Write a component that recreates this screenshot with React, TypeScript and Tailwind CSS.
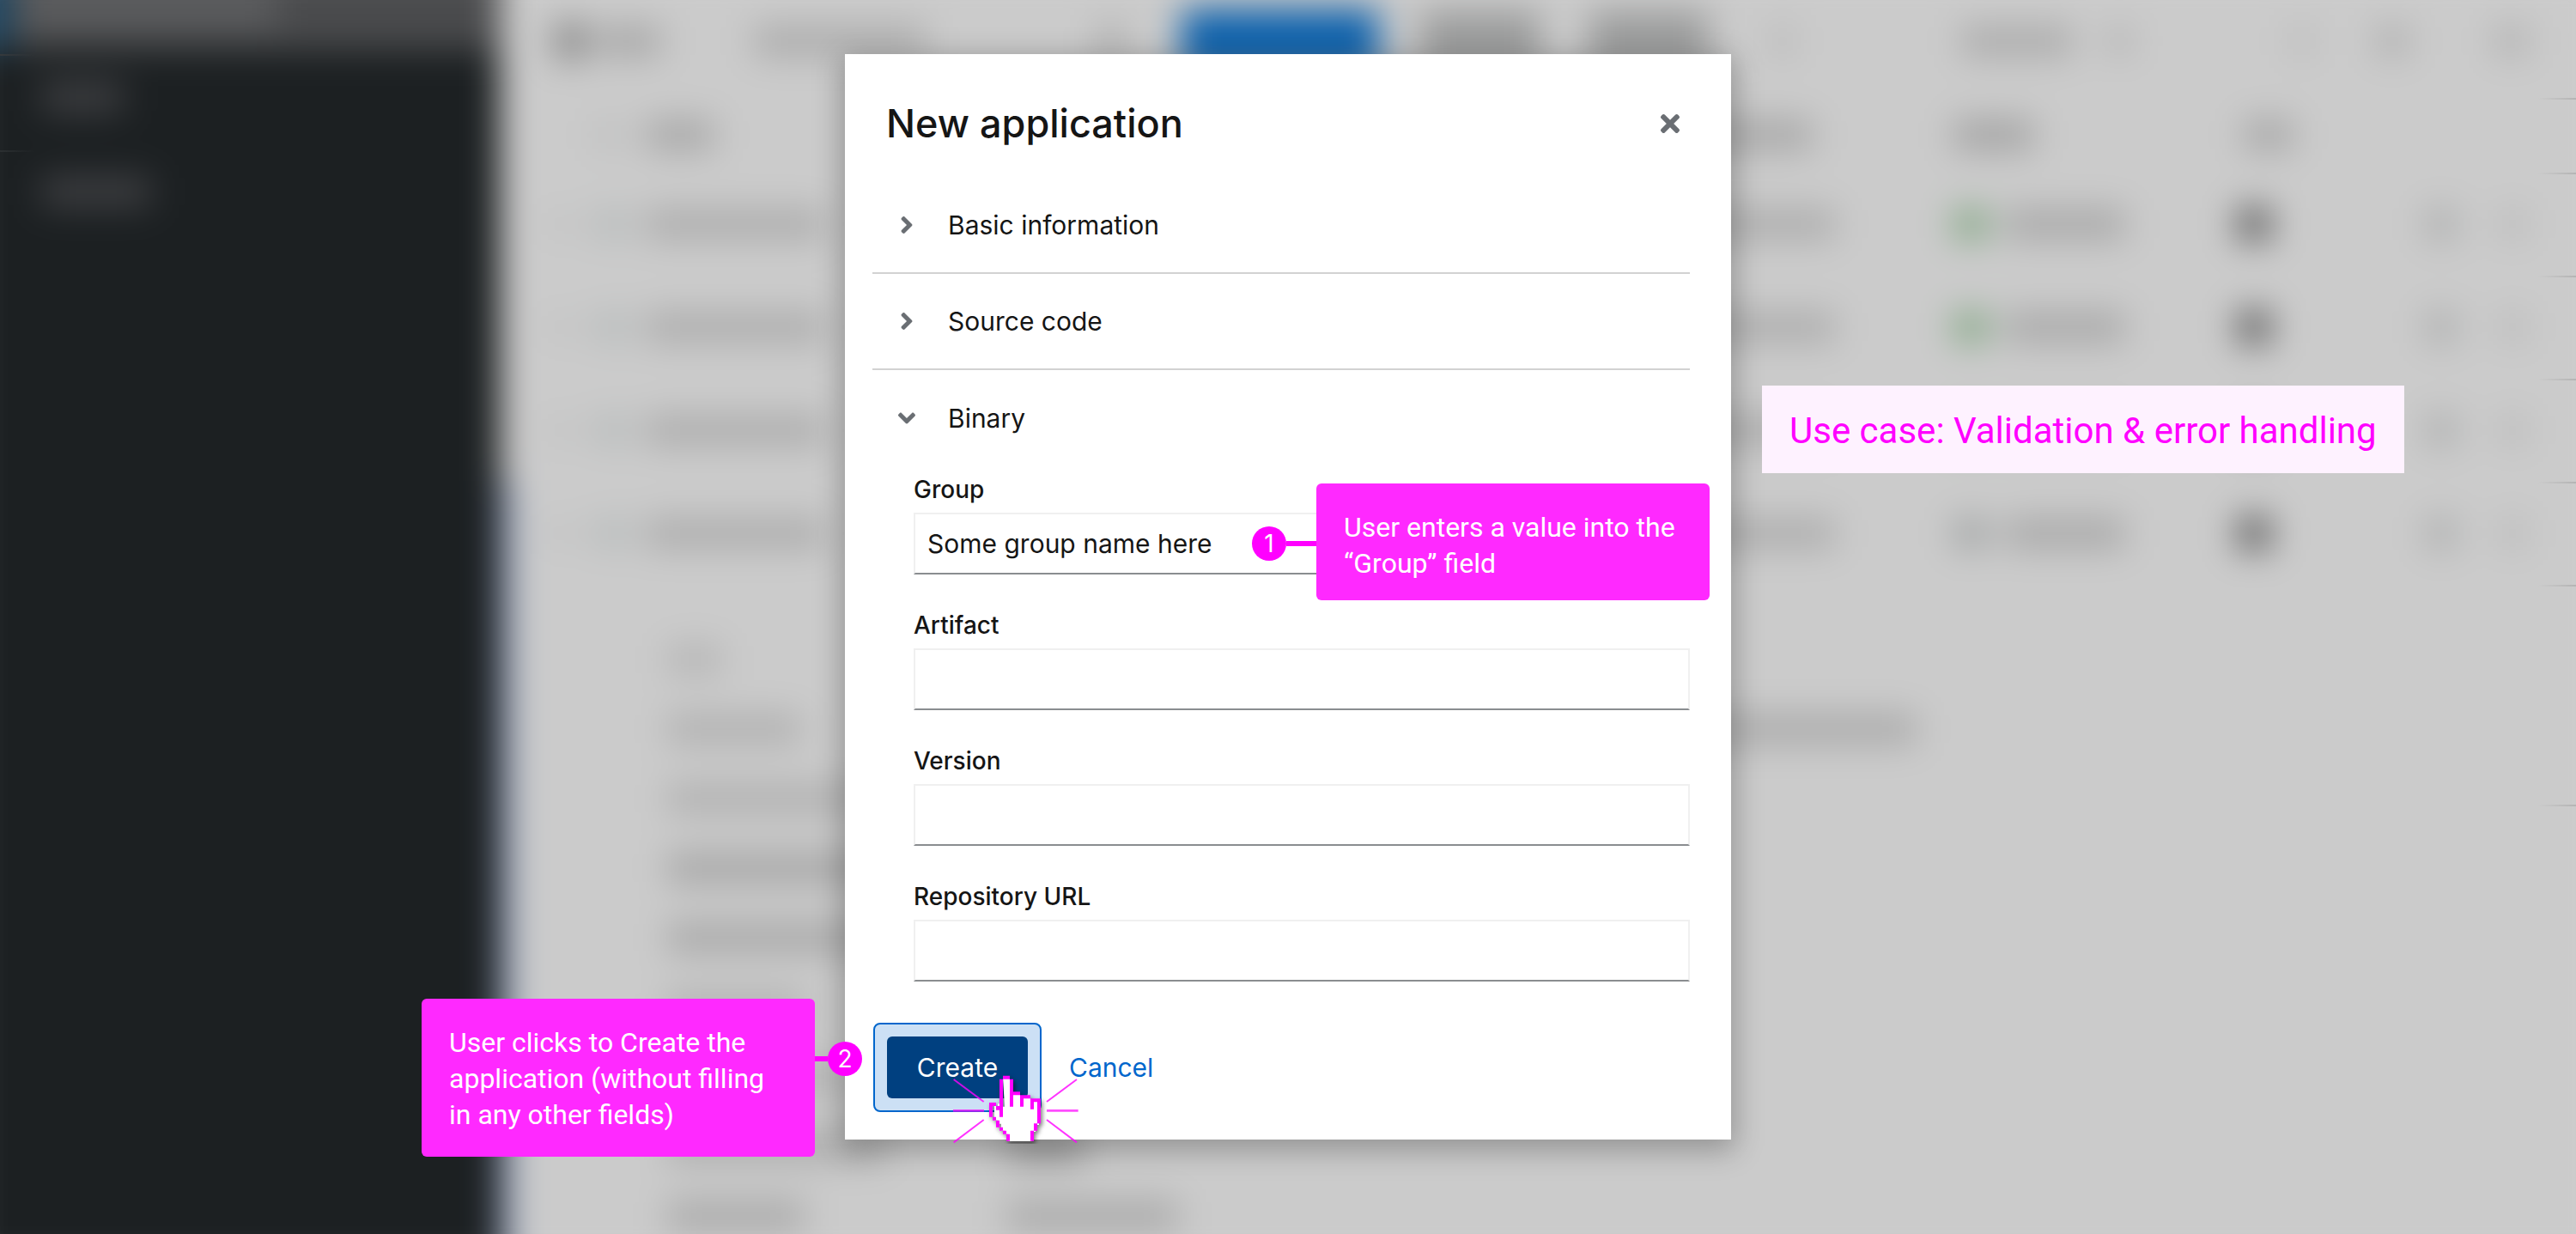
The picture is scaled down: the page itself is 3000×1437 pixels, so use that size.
import type { ReactNode } from "react";
import { FaAngleDown, FaAngleRight, FaTimes } from "react-icons/fa";

/* ---------- Blurred page behind the dialog ---------- */

const ROW = "grid grid-cols-[50px_60px_1fr_310px_330px_220px_85px_90px] items-center pl-[60px]";

function Smudge({ className }: { className: string }) {
  return <div className={`shrink-0 rounded ${className}`} />;
}

function TableRow({ ok }: { ok: boolean }) {
  return (
    <div className={`${ROW} h-[120px]`}>
      <Smudge className="h-6 w-6 bg-[#bebebe]" />
      <Smudge className="h-9 w-10 bg-[#b8bcbc]" />
      <Smudge className="h-9 w-[208px] bg-[#adadad]" />
      <Smudge className="h-9 w-[172px] bg-[#adadad]" />
      <div className="flex items-center gap-5">
        <Smudge className={ok ? "h-9 w-10 bg-[#84a885]" : "h-9 w-10 bg-[#a2a5a5]"} />
        <Smudge className="h-9 w-[140px] bg-[#a9a9a9]" />
      </div>
      <Smudge className="h-10 w-10 bg-[#646464]" />
      <Smudge className="h-10 w-9 bg-[#b0b1b1]" />
      <Smudge className="h-9 w-8 bg-[#bcbcbc]" />
    </div>
  );
}

const DETAILS: [string, string][] = [
  ["h-9 w-[64px] bg-[#b6b6b6]", ""],
  ["h-9 w-[156px] bg-[#b1b1b1]", "h-9 w-[1060px] bg-[#ababab]"],
  ["h-9 w-[240px] bg-[#b1b1b1]", ""],
  ["h-9 w-[280px] bg-[#a7a7a7]", ""],
  ["h-9 w-[260px] bg-[#a9a9a9]", ""],
  ["h-9 w-[160px] bg-[#b1b1b1]", ""],
  ["h-9 w-[220px] bg-[#b4b4b4]", ""],
  ["h-9 w-[255px] bg-[#acacac]", "h-9 w-[90px] bg-[#9a9a9a]"],
  ["h-9 w-[160px] bg-[#aaaaaa]", "h-9 w-[200px] bg-[#aaaaaa]"],
];

function Backdrop() {
  return (
    <div aria-hidden="true" className="absolute inset-0 overflow-hidden bg-[#cbcbcb]">
      <div className="absolute -inset-10 flex bg-[#cbcbcb] blur-[20px]">
        <div className="flex w-[622px] shrink-0 flex-col bg-[#1c2022]">
          <div className="flex h-[98px] items-center bg-[#4a4b4d]">
            <div className="h-full w-[54px] bg-[#1c4562]" />
            <Smudge className="ml-2 h-11 w-[300px] bg-[#5e5f61]" />
          </div>
          <div className="flex h-[110px] items-center pl-[88px]">
            <Smudge className="h-9 w-[96px] bg-[#3e3f42]" />
          </div>
          <div className="flex h-[110px] items-center pl-[88px]">
            <Smudge className="h-9 w-[128px] bg-[#3e3f42]" />
          </div>
        </div>
        <div className="mt-[600px] w-4 shrink-0 bg-[#8d9dbd]" />
        <div className="-ml-4 min-w-0 flex-1 pt-10 pr-10">
          <div className="flex h-[95px] items-center pl-[64px]">
            <Smudge className="h-11 w-9 bg-[#888888]" />
            <Smudge className="ml-3 h-9 w-[76px] bg-[#a8a8a8]" />
            <Smudge className="ml-[108px] h-9 w-[200px] bg-[#acacac]" />
            <Smudge className="ml-[200px] h-9 w-8 bg-[#acacac]" />
            <Smudge className="ml-[66px] h-[76px] w-[230px] bg-[#1063ad]" />
            <Smudge className="ml-[48px] h-[70px] w-[140px] bg-[#9b9c9c]" />
            <Smudge className="ml-[56px] h-[70px] w-[140px] bg-[#9b9c9c]" />
            <Smudge className="ml-[76px] h-9 w-5 bg-[#b4b4b4]" />
            <div className="flex flex-1 items-center justify-end pr-[56px]">
              <Smudge className="h-9 w-[130px] bg-[#acacac]" />
              <Smudge className="ml-[40px] h-7 w-7 bg-[#b0b0b0]" />
              <Smudge className="ml-[184px] h-9 w-7 bg-[#bdbdbd]" />
              <Smudge className="ml-[72px] h-9 w-10 bg-[#b2b2b2]" />
              <Smudge className="ml-[98px] h-9 w-10 bg-[#b4b4b4]" />
            </div>
          </div>
          <div className={`${ROW} h-[124px]`}>
            <div />
            <Smudge className="h-9 w-8 bg-[#bfc0c0]" />
            <Smudge className="h-9 w-[80px] bg-[#a8a8a8]" />
            <Smudge className="h-9 w-[146px] bg-[#a8a8a8]" />
            <Smudge className="h-9 w-[94px] bg-[#a4a4a4]" />
            <Smudge className="ml-2 h-9 w-[58px] bg-[#a8a8a8]" />
          </div>
          <div className="-mt-[18px]">
            <TableRow ok />
            <TableRow ok />
            <TableRow ok />
            <TableRow ok={false} />
          </div>
          <div className="pt-[46px] pl-[195px]">
            {DETAILS.map(([name, value], i) => (
              <div key={i} className="flex h-[81px] items-center">
                <div className="w-[395px] shrink-0">
                  <Smudge className={name} />
                </div>
                {value && <Smudge className={value} />}
              </div>
            ))}
          </div>
        </div>
      </div>
      <div className="relative flex justify-between">
        <div className="w-10 pt-[63px]">
          <div className="h-[2px] bg-linear-to-r from-[#36393c] to-transparent" />
          <div className="mt-[110px] h-[2px] bg-linear-to-r from-[#2c3032] to-transparent" />
        </div>
        <div className="w-11 pt-[114px]">
          <div className="h-[2px] bg-linear-to-l from-[#b4b4b4] to-transparent" />
          <div className="mt-[85px] h-[2px] bg-linear-to-l from-[#b4b4b4] to-transparent" />
          {[0, 1, 2, 3].map((i) => (
            <div key={i} className="mt-[118px] h-[2px] bg-linear-to-l from-[#b4b4b4] to-transparent" />
          ))}
          <div className="mt-[254px] h-[2px] bg-linear-to-l from-[#b4b4b4] to-transparent" />
        </div>
      </div>
    </div>
  );
}

/* ---------- Dialog ---------- */

function Section({ title, open = false }: { title: string; open?: boolean }) {
  const Icon = open ? FaAngleDown : FaAngleRight;
  return (
    <h2 className={open ? "" : "border-b-2 border-[#d2d2d2]"}>
      <button
        type="button"
        aria-expanded={open}
        className={`flex w-full items-center gap-8 px-6 text-left text-[30px] ${open ? "h-28" : "h-[110px]"}`}
      >
        <span className="flex w-8 justify-center text-[32px] text-[#6a6e73]">
          <Icon />
        </span>
        {title}
      </button>
    </h2>
  );
}

function Field({ id, label, value }: { id: string; label: string; value?: string }) {
  return (
    <div>
      <label htmlFor={id} className="mb-1.5 block text-[28px] leading-[42px] font-medium">
        {label}
      </label>
      <input
        id={id}
        type="text"
        defaultValue={value}
        className="block h-[72px] w-full border-2 border-[#f0f0f0] border-b-[#8a8d90] bg-white px-3.5 text-[30px] outline-none"
      />
    </div>
  );
}

function Dialog() {
  return (
    <section
      role="dialog"
      aria-labelledby="dialog-title"
      className="bg-white pb-8 text-[#151515] shadow-[0_8px_32px_4px_rgba(0,0,0,0.28)]"
    >
      <header className="flex h-36 items-center justify-between pt-[18px] pr-[55px] pl-12">
        <h1 id="dialog-title" className="text-[45px] font-medium">
          New application
        </h1>
        <button type="button" aria-label="Close" className="text-[32px] text-[#6a6e73]">
          <FaTimes />
        </button>
      </header>
      <div className="pr-12 pl-8">
        <Section title="Basic information" />
        <Section title="Source code" />
        <Section title="Binary" open />
        <div className="flex flex-col gap-[38px] pt-1.5 pl-12">
          <Field id="group" label="Group" value="Some group name here" />
          <Field id="artifact" label="Artifact" />
          <Field id="version" label="Version" />
          <Field id="repository" label="Repository URL" />
        </div>
      </div>
      <footer className="mt-12 flex items-center px-[33px] text-[30px]">
        <div className="rounded-lg border-2 border-[#0066cc] bg-[#cce0f5] p-3.5">
          <button type="button" className="h-[72px] w-[164px] rounded-md bg-[#004080] text-white">
            Create
          </button>
        </div>
        <button type="button" className="h-[72px] px-8 text-[#0066cc]">
          Cancel
        </button>
      </footer>
    </section>
  );
}

/* ---------- Annotations laid over the dialog ---------- */

function Badge({ children }: { children: ReactNode }) {
  return (
    <span className="flex size-10 items-center justify-center rounded-full bg-[#ff00ff] text-[28px] leading-10 text-white">
      {children}
    </span>
  );
}

function Callout({ tall = false, children }: { tall?: boolean; children: ReactNode }) {
  return (
    <p
      className={`w-[458px] rounded-md bg-[#ff29ff] px-8 pt-[30px] font-[Roboto,sans-serif] text-[32px] leading-[42px] text-white ${
        tall ? "pb-7" : "pb-[22px]"
      }`}
    >
      {children}
    </p>
  );
}

function ClickCursor() {
  return (
    <svg
      aria-hidden="true"
      viewBox="30 150 438 246"
      className="pointer-events-none absolute top-[1187px] left-[126px] h-[82px] w-[146px]"
    >
      <g stroke="#ff00ff" strokeOpacity="0.8" strokeWidth="6" fill="none">
        <path d="M32 171 137 249M462 171 357 249M32 391 137 312M462 391 357 312" />
        <path d="M30 280H138M357 280H467" strokeWidth="8" strokeOpacity="0.7" />
      </g>
      <g className="drop-shadow-[6px_8px_8px_rgba(0,0,0,0.5)]">
        <path
          fill="#ffffff"
          d="M204 164h24v56h36v12h36v12h30v86h-12v24h-12v33h-84v-25h-12v-12h-12v-24h-12v-12h-12v-50h12v-8h12v10h12z"
        />
        <path
          fill="#ff00ff"
          d="M204 158h24v12h-24zM192 170h12v132h-12zM228 170h12v96h-12zM240 214h24v12h-24zM264 226h12v40h-12zM276 226h24v12h-24zM300 238h12v37h-12zM312 238h24v12h-24zM324 250h12v75h-12zM312 325h12v25h-12zM300 350h12v36h-12zM156 252h24v12h-24zM156 264h12v38h-12zM180 264h12v14h-12zM168 302h12v12h-12zM180 314h12v24h-12zM192 338h12v12h-12zM204 350h12v12h-12zM216 362h12v24h-12z"
        />
      </g>
    </svg>
  );
}

export default function App() {
  return (
    <div className="relative min-h-screen overflow-hidden font-[Inter,sans-serif]">
      <Backdrop />
      <main className="relative flex justify-center pt-[63px] pb-[110px]">
        <div className="relative w-full max-w-[1032px]">
          <Dialog />
          <aside className="absolute top-[500px] left-[474px] flex items-start">
            <div className="mt-[50px] flex items-center">
              <Badge>1</Badge>
              <span className="h-1.5 w-[35px] bg-[#ff00ff]" />
            </div>
            <Callout>
              User enters a value into the
              <br />
              “Group” field
            </Callout>
          </aside>
          <aside className="absolute top-[1100px] right-[1012px] flex items-start">
            <Callout tall>
              User clicks to Create the
              <br />
              application (without filling
              <br />
              in any other fields)
            </Callout>
            <div className="mt-[50px] flex items-center">
              <span className="h-1.5 w-[15px] bg-[#ff00ff]" />
              <Badge>2</Badge>
            </div>
          </aside>
          <p className="absolute top-[386px] left-[1068px] flex h-[102px] items-center bg-[#fef2ff] px-8 pt-0.5 font-[Roboto,sans-serif] text-[42px] whitespace-nowrap text-[#ff00ff]">
            Use case: Validation &amp; error handling
          </p>
          <ClickCursor />
        </div>
      </main>
    </div>
  );
}
